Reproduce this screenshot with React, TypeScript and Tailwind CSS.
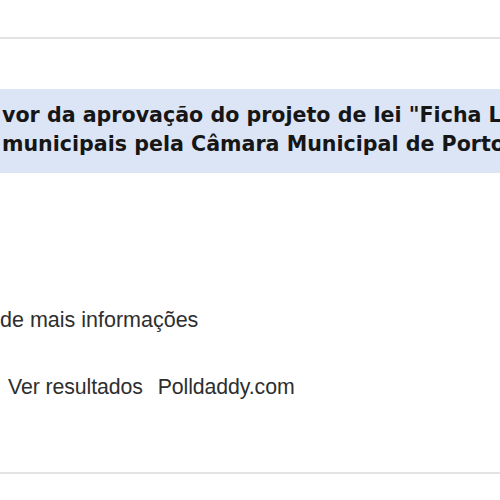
import React from 'react';

// Recorte de enquete (Polldaddy) – pergunta destacada e links de rodapé
export default function App() {
  return (
    <div className="w-[500px] h-[500px] bg-white overflow-hidden" style={{ fontFamily: '"Liberation Sans", Arial, sans-serif' }}>
      <div className="pt-[37px]">
        <div className="h-[2px] bg-[#e3e3e3]" />
      </div>

      {/* Pergunta */}
      <div className="mt-[50px] h-[84px] bg-[#dce5f5] pt-[12px] pl-[2px] overflow-hidden">
        <div
          className="font-bold text-[20.6px] leading-[29px] text-[#161616] whitespace-nowrap"
          style={{ fontFamily: '"DejaVu Sans", Verdana, sans-serif' }}
        >
          <div>vor da aprovação do projeto de lei "Ficha Limpa"</div>
          <div>municipais pela Câmara Municipal de Porto Alegre?</div>
        </div>
      </div>

      <div className="mt-[135px] text-[21.5px] leading-[24px] text-[#2e2e2e] whitespace-nowrap">
        de mais informações
      </div>

      <div className="mt-[43px] pl-[8px] flex gap-[15px] text-[21.3px] leading-[24px] text-[#2e2e2e] whitespace-nowrap tracking-[-0.1px]">
        <span>Ver resultados</span>
        <span>Polldaddy.com</span>
      </div>

      <div className="mt-[73px] h-[2px] bg-[#e3e3e3]" />
    </div>
  );
}
